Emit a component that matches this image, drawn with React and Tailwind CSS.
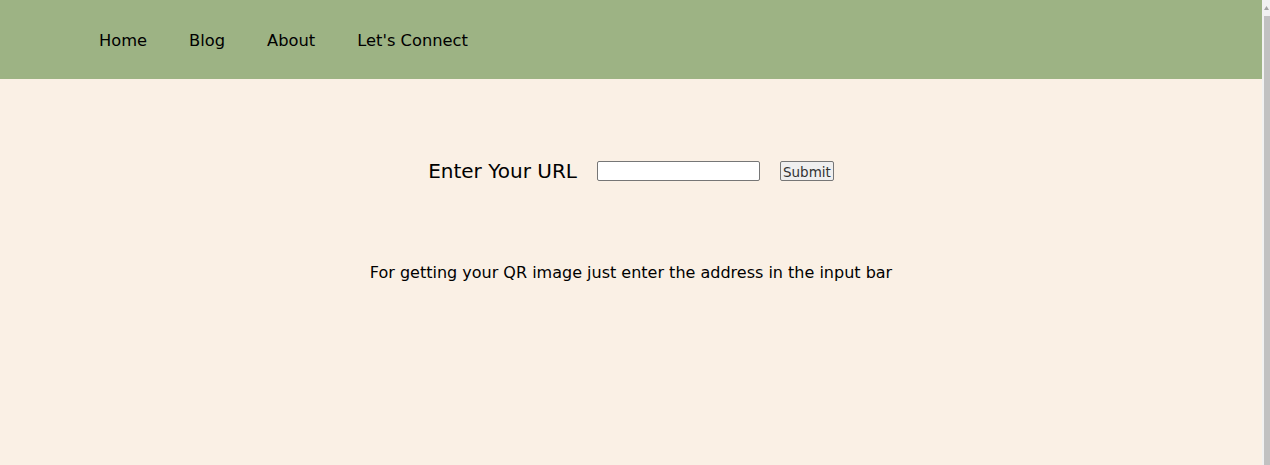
export default function App() {
  return (
    <div className="flex h-screen bg-[#faf0e5] text-black" style={{ fontFamily: '"DejaVu Sans", sans-serif' }}>
      <div className="flex-1 min-w-0">
        {/* Top nav */}
        <nav className="h-[79px] bg-[#9db384] flex items-center pt-[4px] pl-[99px] gap-[42px] text-[16.3px]">
          <a href="#">Home</a>
          <a href="#">Blog</a>
          <a href="#">About</a>
          <a href="#">Let's Connect</a>
        </nav>

        {/* Form */}
        <div className="flex items-center justify-center gap-[20px] mt-[77px]">
          <label className="text-[20px]">Enter Your URL</label>
          <input type="text" className="w-[163px] h-[20px] bg-white border border-[#767676] rounded-[2px]" />
          <button className="h-[20px] px-[2px] bg-[#efefef] border border-[#767676] rounded-[2px] text-[13.5px] text-[#333]">
            Submit
          </button>
        </div>

        <p className="text-center mt-[75px] text-[16px]">
          For getting your QR image just enter the address in the input bar
        </p>
      </div>

      {/* browser scrollbar */}
      <div className="w-[8px] bg-[#f1f1f1] flex flex-col">
        <div className="h-[16px] flex items-center justify-end pr-[1px]">
          <svg width="5" height="4" viewBox="0 0 5 4">
            <path d="M2.5 0 L5 4 L0 4 Z" fill="#a3a3a3" />
          </svg>
        </div>
        <div className="flex-1 ml-[2px] bg-[#c1c1c1]" />
      </div>
    </div>
  )
}
